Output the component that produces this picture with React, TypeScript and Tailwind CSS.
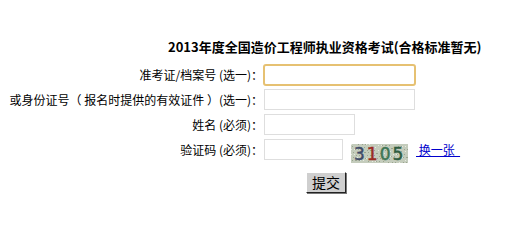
import React from "react";

const font = { fontFamily: '"Noto Sans CJK SC", "Liberation Sans", sans-serif' };

function Captcha() {
  // noisy code image
  const dots = [];
  for (let i = 0; i < 120; i++) {
    const x = (i * 37) % 57;
    const y = (i * 13 + (i % 7) * 5) % 19;
    dots.push(<rect key={i} x={x} y={y} width="1" height="1" fill={i % 3 ? "#9aa590" : "#e6ebe0"} />);
  }
  return (
    <svg width="57" height="19" viewBox="0 0 57 19" className="block">
      <rect width="57" height="19" fill="#c4ccbc" />
      {dots}
      <text
        x="3"
        y="16"
        fontFamily="DejaVu Sans, sans-serif"
        fontSize="17"
        letterSpacing="2"
        strokeWidth="0.5"
      >
        <tspan fill="#3e4a68" stroke="#3e4a68">3</tspan>
        <tspan fill="#9b2b22" stroke="#9b2b22">1</tspan>
        <tspan fill="#3d7654" stroke="#3d7654">0</tspan>
        <tspan fill="#2f5c40" stroke="#2f5c40">5</tspan>
      </text>
    </svg>
  );
}

export default function App() {
  return (
    <div className="w-[518px] h-[206px] bg-white text-black text-[12px] leading-[14px]" style={font}>
      <div className="pt-[40px] pl-[168px] h-[54px] text-[13px] font-bold whitespace-nowrap">
        2013年度全国造价工程师执业资格考试(合格标准暂无)
      </div>

      <div className="mt-[8px] grid grid-cols-[263px_1fr] auto-rows-[25px] items-center">
        <div className="text-right whitespace-nowrap">准考证/档案号 (选一)：</div>
        <div>
          <input className="block w-[153px] h-[22px] border-2 border-[#e6c172] rounded-[3px] outline-none bg-white" />
        </div>

        <div className="text-right whitespace-nowrap">或身份证号（ 报名时提供的有效证件 ）(选一)：</div>
        <div>
          <input className="block ml-px w-[151px] h-[21px] border border-[#dedede] outline-none bg-white" />
        </div>

        <div className="text-right whitespace-nowrap">姓名 (必须)：</div>
        <div>
          <input className="block ml-px w-[91px] h-[21px] border border-[#dedede] outline-none bg-white" />
        </div>

        <div className="text-right whitespace-nowrap">验证码 (必须)：</div>
        <div className="flex items-center">
          <input className="block ml-px w-[79px] h-[21px] border border-[#dedede] outline-none bg-white" />
          <div className="ml-[8px] mt-[8px]">
            <Captcha />
          </div>
          <a href="#" className="ml-[8px] text-[#0000cc] underline whitespace-nowrap">
            &nbsp;换一张&nbsp;&nbsp;
          </a>
        </div>
      </div>

      <div className="mt-[10px] pl-[306px]">
        <button
          className="w-[40px] h-[21px] bg-[#cfcfcf] text-[14px] leading-[17px] border border-t-white border-l-white border-r-[#222] border-b-[#222] shadow-[1px_1px_0_#777]"
          style={font}
        >
          提交
        </button>
      </div>
    </div>
  );
}
